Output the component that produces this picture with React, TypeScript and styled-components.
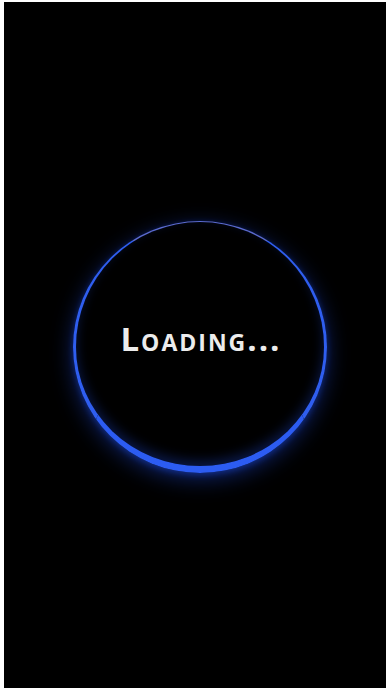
import React from 'react';
import styled, { createGlobalStyle } from 'styled-components';

const GlobalStyle = createGlobalStyle`
  html, body {
    margin: 0;
    padding: 0;
    background: #ffffff;
  }
  #root {
    height: 688px;
  }
`;

const Screen = styled.div`
  box-sizing: border-box;
  margin: 2px 0 0 4px;
  height: 686px;
  background: #000000;
  display: flex;
  align-items: center;
  justify-content: center;
  padding: 4px 0 0 10px;
`;

const Ring = styled.div`
  box-sizing: border-box;
  width: 254px;
  height: 252px;
  border-radius: 50%;
  border-style: solid;
  border-width: 1px 3px 7px 3px;
  border-color: #5a6ad0 #2f5ef0 #2c5cf2 #2f5ef0;
  box-shadow:
    0 6px 22px rgba(35, 85, 255, 0.4),
    0 2px 6px rgba(35, 85, 255, 0.35),
    inset 0 -5px 12px rgba(35, 85, 255, 0.28);
  display: flex;
  align-items: center;
  justify-content: center;
`;

const Label = styled.div`
  font-family: 'Open Sans', 'Liberation Sans', sans-serif;
  font-weight: 700;
  font-size: 33px;
  font-variant: small-caps;
  letter-spacing: 2px;
  color: #ececec;
  margin: 0 0 12px 2px;
`;

export default function App() {
  return (
    <>
      <GlobalStyle />
      <Screen>
        <Ring>
          <Label>Loading...</Label>
        </Ring>
      </Screen>
    </>
  );
}
